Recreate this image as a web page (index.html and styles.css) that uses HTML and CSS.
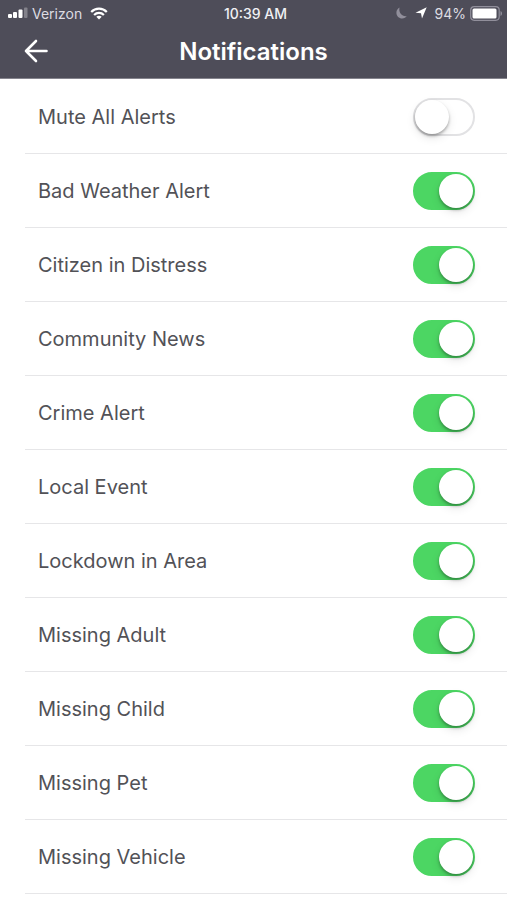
FILE: index.html
```
<!DOCTYPE html>
<html lang="en">
<head>
    <meta charset="utf-8">
    <meta name="viewport" content="width=device-width, initial-scale=1">
    <title>Notifications</title>
    <link rel="stylesheet" href="styles.css">
</head>
<body>
    <header class="header">
        <div class="status">
            <div class="status-left">
                <svg width="20" height="12" viewBox="0 0 20 12" fill="#fff">
                    <rect x="0" y="7" width="4" height="4" rx="1"/>
                    <rect x="5" y="5" width="4" height="6" rx="1"/>
                    <rect x="10.500" y="2.500" width="4" height="8.500" rx="1"/>
                    <rect x="16" y="0.500" width="3.500" height="10.500" rx="1" opacity="0.300"/>
                </svg>
                <span class="carrier">Verizon</span>
                <svg class="wifi" width="18" height="13" viewBox="0 0 18 13" fill="none" stroke="#fff" stroke-width="2.200">
                    <path d="M1.200 4.900C5.500 0.500 12.500 0.500 16.800 4.900"/>
                    <path d="M4.100 8C6.900 5.200 11.100 5.200 13.900 8"/>
                    <path d="M9 12.500L6.300 9.800C7.800 8.400 10.200 8.400 11.700 9.800Z" fill="#fff" stroke="none"/>
                </svg>
            </div>
            <span class="time">10:39 AM</span>
            <div class="status-right">
                <svg width="11" height="12" viewBox="0 0 11 12" fill="#918f9b">
                    <path d="M3.500 0.500C1.600 1.500 0.400 3.500 0.400 5.700C0.400 9 3 11.500 6.200 11.500C8.200 11.500 9.900 10.600 10.800 9C7 10 2.200 6.500 3.500 0.500Z"/>
                </svg>
                <svg class="location" width="12" height="12" viewBox="0 0 12 12" fill="#fff">
                    <path d="M11.700 0.300L7 11.500L6 6.300L0.500 5.700Z"/>
                </svg>
                <span>94%</span>
                <svg class="battery" width="33" height="15" viewBox="0 0 33 15">
                    <rect x="0.700" y="0.700" width="28.500" height="13.600" rx="3.500" fill="none" stroke="#918f9b" stroke-width="1.200"/>
                    <rect x="2.500" y="2.500" width="24" height="10" rx="1.500" fill="#fff"/>
                    <path d="M30.500 5C32.500 5.800 32.500 9.200 30.500 10Z" fill="#918f9b"/>
                </svg>
            </div>
        </div>
        <div class="navbar">
            <button class="back" type="button" aria-label="Back">
                <svg width="24" height="24" viewBox="0 0 24 24" fill="none" stroke="#fff" stroke-width="2.600" stroke-linecap="round" stroke-linejoin="round">
                    <path d="M12 2L2 12L12 22M2 12H22.500"/>
                </svg>
            </button>
            <h1>Notifications</h1>
        </div>
    </header>

    <main class="settings">
        <label class="row">Mute All Alerts<input class="switch" type="checkbox" role="switch"></label>
        <label class="row">Bad Weather Alert<input class="switch" type="checkbox" role="switch" checked></label>
        <label class="row">Citizen in Distress<input class="switch" type="checkbox" role="switch" checked></label>
        <label class="row">Community News<input class="switch" type="checkbox" role="switch" checked></label>
        <label class="row">Crime Alert<input class="switch" type="checkbox" role="switch" checked></label>
        <label class="row">Local Event<input class="switch" type="checkbox" role="switch" checked></label>
        <label class="row">Lockdown in Area<input class="switch" type="checkbox" role="switch" checked></label>
        <label class="row">Missing Adult<input class="switch" type="checkbox" role="switch" checked></label>
        <label class="row">Missing Child<input class="switch" type="checkbox" role="switch" checked></label>
        <label class="row">Missing Pet<input class="switch" type="checkbox" role="switch" checked></label>
        <label class="row">Missing Vehicle<input class="switch" type="checkbox" role="switch" checked></label>
    </main>
</body>
</html>
```

FILE: styles.css
```
* {
    box-sizing: border-box;
}

body {
    margin: 0;
    color: #525257;
    background-color: #fff;
    font-family: Inter, "Liberation Sans", sans-serif;
}

.header {
    color: #fff;
    background-color: #4e4d59;
    border-bottom: 1px solid #85848d;
}

/* carrier, clock, battery */
.status {
    display: grid;
    grid-template-columns: 1fr auto 1fr;
    align-items: center;
    height: 26px;
    padding: 0 4px 0 8px;
    font-size: 14px;
}

.status-left,
.status-right {
    display: flex;
    align-items: center;
    color: #dddce2;
}

.status-left {
    gap: 4px;
}

.status-right {
    justify-content: flex-end;
    gap: 4px;
}

.wifi {
    margin-left: 4px;
}

.location {
    margin: 0 4px;
}

.time {
    color: #f0f0f4;
    font-weight: 500;
}

/* back button and title */
.navbar {
    display: grid;
    grid-template-columns: 48px 1fr 48px;
    align-items: center;
    height: 52px;
    padding-bottom: 2px;
}

.back {
    display: flex;
    justify-content: flex-end;
    padding: 0;
    border: 0;
    background: none;
    cursor: pointer;
}

h1 {
    margin: 0;
    font-size: 24px;
    font-weight: 600;
    text-align: center;
}

/* list of alerts */
.settings {
    padding: 1px 0 0 25px;
}

.row {
    display: flex;
    align-items: center;
    justify-content: space-between;
    height: 74px;
    padding: 0 32px 0 13px;
    border-bottom: 1px solid #e6e6e8;
    font-size: 20px;
}

.switch {
    appearance: none;
    display: flex;
    align-items: center;
    width: 62px;
    height: 38px;
    margin: 0;
    padding: 0;
    border: 2px solid #e2e2e4;
    border-radius: 19px;
    background-color: #fff;
    cursor: pointer;
}

.switch::before {
    content: "";
    width: 34px;
    height: 34px;
    border-radius: 50%;
    background-color: #fff;
    box-shadow: 0 2px 3px rgba(0, 0, 0, 0.3), 0 4px 10px rgba(0, 0, 0, 0.1);
}

.switch:checked {
    justify-content: flex-end;
    border-color: #4cd663;
    background-color: #4cd663;
}
```
